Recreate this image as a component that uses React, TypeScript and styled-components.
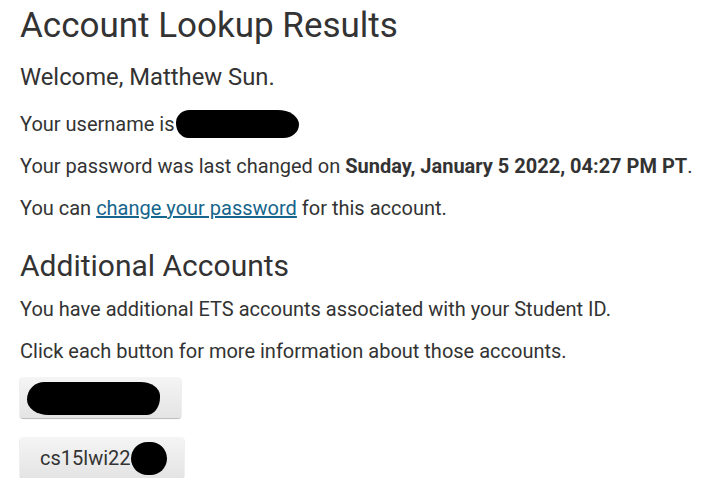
import React from "react";
import styled, { createGlobalStyle } from "styled-components";

const Global = createGlobalStyle`
  html, body { margin: 0; padding: 0; background: #fff; }
  body { font-family: Roboto, "Noto Sans", sans-serif; color: #333; }
`;

const Page = styled.main`
  display: flex;
  flex-direction: column;
  align-items: flex-start;
  padding: 6px 20px 0 20px;
`;

const Title = styled.h1`
  font-size: 35px;
  font-weight: 400;
  line-height: 40px;
  margin: 0 0 17px 0;
`;

const Welcome = styled.p`
  font-size: 23.8px;
  line-height: 28px;
  margin: 0 0 19px 0;
`;

const Para = styled.p`
  font-size: 20px;
  line-height: 28px;
  margin: 0 0 14px 0;
  white-space: nowrap;
`;

const Strong = styled.strong`
  font-weight: 700;
`;

const Link = styled.a`
  color: #16658c;
  text-decoration: underline;
`;

const SubTitle = styled.h2`
  font-size: 30px;
  font-weight: 400;
  line-height: 36px;
  margin: 12px 0 11px 0;
`;

const Redaction = styled.span<{ $w: number; $h: number }>`
  display: inline-block;
  vertical-align: top;
  width: ${(p) => p.$w}px;
  height: ${(p) => p.$h}px;
  background: #000;
  border-radius: 999px;
`;

const UserBlob = styled(Redaction)`
  margin-left: -3px;
  border-radius: 14px 22px 16px 13px / 13px 15px 14px 15px;
`;

const Buttons = styled.div`
  display: flex;
  flex-direction: column;
  align-items: flex-start;
  gap: 20px;
  margin-top: -1px;
`;

const AccountButton = styled.button<{ $w: number }>`
  width: ${(p) => p.$w}px;
  height: 40px;
  border: none;
  border-radius: 3px;
  background: linear-gradient(#f4f4f4, #e4e4e4);
  box-shadow: 0 1px 1px rgba(0, 0, 0, 0.25), 0 0 0 1px rgba(0, 0, 0, 0.04);
  font-family: Roboto, sans-serif;
  font-size: 20px;
  color: #333;
  display: flex;
  align-items: center;
  padding: 0 0 0 20px;
`;

const ButtonBlob = styled(Redaction)`
  margin-left: -13px;
  border-radius: 18px 20px 14px 22px / 18px 14px 18px 16px;
`;

const TailBlob = styled(Redaction)`
  vertical-align: middle;
`;

export default function App() {
  return (
    <Page>
      <Global />
      <Title>Account Lookup Results</Title>
      <Welcome>Welcome, Matthew Sun.</Welcome>
      <Para>
        Your username is <UserBlob $w={123} $h={28} />
      </Para>
      <Para>
        Your password was last changed on{" "}
        <Strong>Sunday, January 5 2022, 04:27 PM PT</Strong>.
      </Para>
      <Para>
        You can <Link href="#">change your password</Link> for this account.
      </Para>
      <SubTitle>Additional Accounts</SubTitle>
      <Para>You have additional ETS accounts associated with your Student ID.</Para>
      <Para>Click each button for more information about those accounts.</Para>
      <Buttons>
        <AccountButton $w={161}>
          <ButtonBlob $w={133} $h={33} />
        </AccountButton>
        <AccountButton $w={164}>
          cs15lwi22
          <TailBlob $w={36} $h={33} />
        </AccountButton>
      </Buttons>
    </Page>
  );
}
